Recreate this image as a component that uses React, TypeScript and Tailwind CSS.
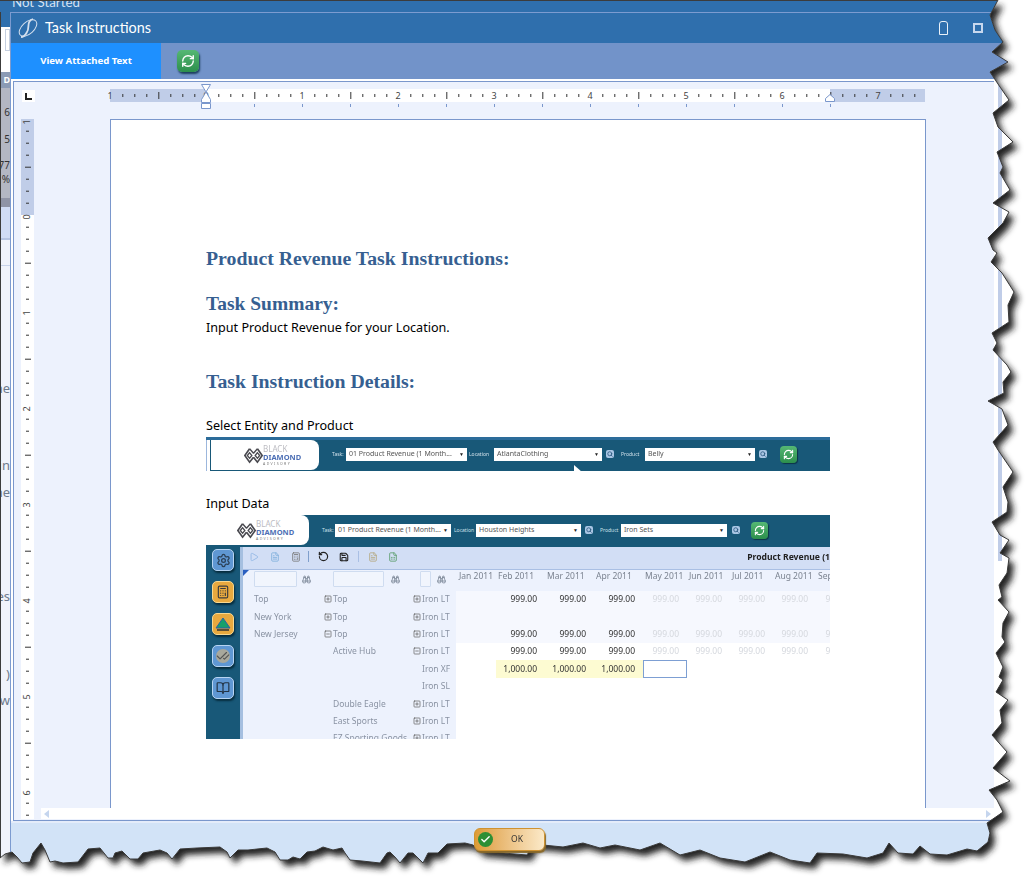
import { Binoculars, BookOpen, Calculator, Check, CheckCheck, FileSpreadsheet, FileText, Play, RefreshCw, RotateCcw, Save, Search, Settings, SquareMinus, SquarePlus } from "lucide-react";

const EDGE =
  "998,0 990,15 995,30 1003,42 992,52 1008,62 990,72 1000,87 1009,100 993,113 998,127 1013,142 997,152 1003,167 1000,173 1010,190 " +
  "993,203 1009,212 1003,223 988,238 993,250 997,253 991,262 1002,273 1014,292 1008,305 1009,322 992,333 997,343 993,350 1007,365 1011,372 1003,382 1004,393 988,401 1002,409 1008,425 993,442 998,450 " +
  "1013,472 1003,487 1008,502 1007,512 992,522 1000,535 1009,540 1000,553 1009,558 1007,573 999,585 1002,597 998,600 1009,612 1003,623 1002,637 1005,642 996,653 1003,667 999,677 1003,680 996,692 1008,700 1000,710 " +
  "1002,723 992,735 1007,752 993,768 1010,781 989,790 997,800 1003,812 987,823 990,833 988,842 977,851 967,849 947,855 930,854 920,846 913,854 898,853 889,843 883,853 867,858 843,854 817,853 810,863 790,860 770,852 745,862 720,858 700,850 680,855 660,843 640,850 615,845 " +
  "600,848 583,843 563,847 543,845 533,845 527,855 480,851 473,845 465,843 447,844 438,853 428,853 423,863 413,853 408,853 400,863 395,857 390,852 387,853 380,863 362,861 350,860 345,853 342,848 333,850 323,847 315,851 307,852 300,859 " +
  "293,857 288,860 280,860 275,852 267,848 248,850 238,850 230,858 227,852 220,847 197,848 180,849 172,859 167,853 160,850 143,853 138,859 130,859 122,851 115,853 113,858 108,858 100,848 88,849 78,862 63,863 55,861 50,862 45,850 41,843 33,853 30,862 22,863 17,857 12,852 5,854 0,858";

const dataCols = ["w-[40px] pl-[3px]", "w-[49px] pl-[2px]", "w-[49px] pl-[2px]", "w-[49px] pl-[2px]", "w-[44px] pl-[2px]", "w-[43px] pl-[2px]", "w-[43px] pl-[2px]", "w-[43px] pl-[2px]", "w-[44px] pl-[2px]"];
const cellCols = ["w-[40px]", "w-[49px]", "w-[49px]", "w-[49px]", "w-[44px]", "w-[43px]", "w-[43px]", "w-[43px]", "w-[44px]"];
const months = ["Jan 2011", "Feb 2011", "Mar 2011", "Apr 2011", "May 2011", "Jun 2011", "Jul 2011", "Aug 2011", "Sep 2011"];

const rows = [
  { a: "Top", b: "Top", bx: "+", c: "Iron LT", cx: "+", v: "999.00" },
  { a: "New York", b: "Top", bx: "+", c: "Iron LT", cx: "+", v: "" },
  { a: "New Jersey", b: "Top", bx: "-", c: "Iron LT", cx: "+", v: "999.00" },
  { a: "", b: "Active Hub", bx: "", c: "Iron LT", cx: "-", v: "999.00" },
  { a: "", b: "", bx: "", c: "Iron XF", cx: "", v: "1,000.00" },
  { a: "", b: "", bx: "", c: "Iron SL", cx: "", v: "" },
  { a: "", b: "Double Eagle", bx: "", c: "Iron LT", cx: "+", v: "" },
  { a: "", b: "East Sports", bx: "", c: "Iron LT", cx: "+", v: "" },
  { a: "", b: "EZ Sporting Goods", bx: "", c: "Iron LT", cx: "+", v: "" },
];

function GreenRefresh({ big }: { big?: boolean }) {
  return (
    <div className={big ? "flex h-[22px] w-[22px] items-center justify-center rounded-[5px] bg-gradient-to-b from-[#55b874] to-[#2c8f4c] shadow-[1px_2px_2px_#1c3f5e]" : "flex h-[17px] w-[17px] items-center justify-center rounded-[4px] bg-gradient-to-b from-[#55b874] to-[#2c8f4c] shadow-[1px_1px_1px_#0d3346]"}>
      <RefreshCw size={big ? 14 : 11} color="#fff" strokeWidth={2.4} />
    </div>
  );
}

function HRuler() {
  const ticks = [];
  for (let x = 110.3; x < 925; x += 12) {
    const k = Math.round((x - 206.3) / 12);
    if (k % 8 === 0) continue;
    const long = k % 4 === 0;
    ticks.push(<rect key={x} x={x} y={long ? 92 : 94} width="1" height={long ? 7 : 3} fill="#333" />);
  }
  const marks = [];
  for (let x = 254; x <= 830; x += 48) marks.push(<rect key={x} x={x} y="104" width="1" height="3" fill="#7a97cc" />);
  const nums = [[110, "1"], [206, "0"], [302, "1"], [398, "2"], [494, "3"], [590, "4"], [686, "5"], [782, "6"], [878, "7"]] as const;
  return (
    <svg width="840" height="27" viewBox="100 83 840 27" className="block">
      <rect x="110" y="89" width="815" height="13" fill="#c0cde8" />
      <rect x="205" y="89" width="625" height="13" fill="#fff" />
      {ticks}
      {marks}
      {nums.map(([x, t], i) => (
        <text key={i} x={x} y="99" fontSize="9" textAnchor="middle" fill="#444" fontFamily="Noto Sans, sans-serif">{t}</text>
      ))}
      <path d="M201.5 84.5h9l-4.5 7.5zM201.5 99.5l4.5-7.5 4.5 7.5v3h-9zM201.5 103.5h9v5h-9z" fill="#fff" stroke="#7a97cc" />
      <path d="M825.5 101.5v-3l4.5-4 4.5 4v3z" fill="#fff" stroke="#7a97cc" />
    </svg>
  );
}

function VRuler() {
  const ticks = [];
  for (let y = 131.7; y < 820; y += 12) {
    const k = Math.round((y - 215.7) / 12);
    if (k % 8 === 0) continue;
    const long = k % 4 === 0;
    ticks.push(<rect key={y} x={long ? 25 : 26} y={y} width={long ? 6 : 3} height="1" fill="#333" />);
  }
  const nums = [[123, "1"], [218, "0"], [314, "1"], [410, "2"], [506, "3"], [602, "4"], [698, "5"], [794, "6"]] as const;
  return (
    <svg width="13" height="700" viewBox="21 120 13 700" className="block shrink-0">
      <rect x="21" y="120" width="13" height="700" fill="#fff" />
      <rect x="21" y="120" width="13" height="96" fill="#c0cde8" />
      {ticks}
      {nums.map(([y, t], i) => (
        <text key={i} x="27.5" y={y} fontSize="9" textAnchor="middle" dominantBaseline="middle" fill="#444" fontFamily="Noto Sans, sans-serif" transform={`rotate(-90 27.5 ${y})`}>{t}</text>
      ))}
    </svg>
  );
}

function DiamondLogo({ small }: { small?: boolean }) {
  return (
    <div className={small ? "flex w-[103px] items-center pl-[31px]" : "flex w-[108px] items-center pl-[33px]"}>
      <svg width="19" height="17" viewBox="0 0 34 30" fill="none" stroke="#4a4a50" strokeWidth="3">
        <path d="M10 3 1.5 15 10 27l7-9" />
        <path d="M24 3l8.5 12L24 27l-7-9" />
        <path d="M17 11 10 3M17 11l7-8M10 10l-4 5 4 5 4-5zM24 10l-4 5 4 5 4-5z" strokeWidth="2.4" />
      </svg>
      <div className="flex flex-col leading-none">
        <span className="text-[8px] leading-[8px] text-[#bcbcc2]">BLACK</span>
        <span className="text-[7.5px] font-bold leading-[8px] text-[#4d6fb5]">DIAMOND</span>
        <span className="text-[3.5px] leading-[5px] tracking-[1.4px] text-[#777]">ADVISORY</span>
      </div>
    </div>
  );
}

function MiniSelect({ text, className }: { text: string; className: string }) {
  return (
    <div className={"flex h-[13px] items-center justify-between bg-white px-[3px] text-[7px] text-[#555] " + className}>
      <span className="whitespace-nowrap">{text}</span>
      <span className="text-[5px] text-[#222]">▼</span>
    </div>
  );
}

function MiniSearch() {
  return (
    <div className="flex h-[8px] w-[8px] items-center justify-center rounded-[2px] bg-[#a9c6e4]">
      <Search size={6} color="#24527a" strokeWidth={3} />
    </div>
  );
}

function Tile({ children, orange }: { children: React.ReactNode; orange?: boolean }) {
  return (
    <div className={orange ? "flex h-[22px] w-[22px] items-center justify-center rounded-[5px] border border-[#f8d890] bg-[#e8a93f] shadow-[1px_2px_2px_#062c3d]" : "flex h-[22px] w-[22px] items-center justify-center rounded-[5px] border border-[#b7d4f2] bg-[#5f97d3] shadow-[1px_2px_2px_#062c3d]"}>
      {children}
    </div>
  );
}

function Expander({ kind }: { kind: string }) {
  if (kind === "+") return <SquarePlus size={8} color="#555" className="shrink-0" />;
  if (kind === "-") return <SquareMinus size={8} color="#555" className="shrink-0" />;
  return <span className="w-[8px] shrink-0" />;
}

function InputDataShot() {
  return (
    <div className="flex h-[224px] w-[624px] flex-col overflow-hidden font-['Noto_Sans'] blur-[0.3px]">
      <div className="flex h-[32px] shrink-0 bg-[#185878]">
        <div className="flex h-[30px] rounded-r-[8px] bg-white">
          <DiamondLogo small />
        </div>
        <div className="flex items-center pb-[2px]">
          <span className="ml-[13px] w-[13px] text-[5px] text-[#cfe0ea]">Task:</span>
          <MiniSelect text="01 Product Revenue (1 Month..." className="w-[116px]" />
          <span className="ml-[3px] w-[22px] text-[5px] text-[#cfe0ea]">Location</span>
          <MiniSelect text="Houston Heights" className="w-[105px]" />
          <span className="ml-[4px]"><MiniSearch /></span>
          <span className="ml-[7px] w-[21px] text-[5px] text-[#cfe0ea]">Product</span>
          <MiniSelect text="Iron Sets" className="w-[106px]" />
          <span className="ml-[5px]"><MiniSearch /></span>
          <span className="ml-[11px]"><GreenRefresh /></span>
        </div>
      </div>
      <div className="flex min-h-0 flex-1">
        <div className="flex w-[34px] shrink-0 flex-col items-center gap-[10px] bg-[#185878] pt-[2px]">
          <Tile><Settings size={15} color="#2a3f55" /></Tile>
          <Tile orange><Calculator size={14} color="#3c3c3c" /></Tile>
          <Tile orange>
            <svg width="16" height="14" viewBox="0 0 16 14"><path d="M8 1 15 11H1z" fill="#18a06a" stroke="#2c5fa8" /><path d="M2 13h12" stroke="#333" strokeWidth="1.5" /></svg>
          </Tile>
          <Tile><CheckCheck size={14} color="#555" className="rounded-full bg-[#a8a89c]" /></Tile>
          <Tile><BookOpen size={14} color="#234" /></Tile>
        </div>
        <div className="w-[3px] shrink-0 bg-[#a5bfe0]" />
        <div className="flex min-w-0 flex-1 flex-col">
          <div className="flex h-[23px] shrink-0 items-center border-b border-[#a9bfe4] bg-[#d2def5] pb-[3px] pl-[6px]">
            <Play size={10} color="#8fb6e4" />
            <FileText size={10} color="#7fb0dc" className="ml-[11px]" />
            <Calculator size={10} color="#777" className="ml-[11px]" />
            <span className="ml-[7px] h-[11px] w-px bg-[#7f9fcc]" />
            <RotateCcw size={11} color="#222" strokeWidth={2.6} className="ml-[9px]" />
            <Save size={10} color="#222" strokeWidth={2.6} className="ml-[10px]" />
            <span className="ml-[9px] h-[11px] w-px bg-[#a9bfe4]" />
            <FileText size={10} color="#b5a77e" className="ml-[9px]" />
            <FileSpreadsheet size={10} color="#5a9c6a" className="ml-[10px]" />
            <span className="ml-auto whitespace-nowrap text-[8.6px] font-bold text-[#222]">Product Revenue (1</span>
          </div>
          <div className="flex min-h-0 flex-1">
            <div className="relative w-[213px] shrink-0 bg-[#edf2fd] text-[8.5px] text-[#8a93a3]">
              <div className="absolute left-0 top-0 h-0 w-0 border-r-[6px] border-t-[6px] border-r-transparent border-t-[#2a5fc0]" />
              <div className="flex h-[20.6px] items-center pb-[2px]">
                <div className="ml-[11px] h-[16px] w-[43px] rounded-[1px] border border-[#cfdcf0] bg-[#f1f5fd]" />
                <Binoculars size={9} color="#6f7b8c" className="ml-[5px]" />
                <div className="ml-[22px] h-[16px] w-[51px] rounded-[1px] border border-[#cfdcf0] bg-[#f1f5fd]" />
                <Binoculars size={9} color="#6f7b8c" className="ml-[7px]" />
                <div className="ml-[20px] h-[16px] w-[11px] rounded-[1px] border border-[#cfdcf0] bg-[#f1f5fd]" />
                <Binoculars size={9} color="#6f7b8c" className="ml-[6px]" />
              </div>
              {rows.map((r, i) => (
                <div key={i} className="flex h-[17.4px] items-center whitespace-nowrap">
                  <span className="ml-[11px] w-[70px]">{r.a}</span>
                  <Expander kind={r.bx} />
                  <span className="ml-[1px] w-[80px]">{r.b}</span>
                  <Expander kind={r.cx} />
                  <span className="ml-[1px]">{r.c}</span>
                </div>
              ))}
            </div>
            <div className="min-w-0 flex-1 overflow-hidden bg-white">
              <div className="flex h-[20.6px] w-[500px] items-center bg-[#edf2fd] pb-[9px] text-[8.5px] text-[#7b8390]">
                {months.map((m, i) => (
                  <span key={m} className={"shrink-0 whitespace-nowrap " + dataCols[i]}>{m}</span>
                ))}
              </div>
              {rows.slice(0, 5).map((r, i) => (
                <div key={i} className={i < 3 ? "flex h-[17.4px] w-[500px] items-center bg-[#f6f8fe] text-[8.5px]" : "flex h-[17.4px] w-[500px] items-center text-[8.5px]"}>
                  {cellCols.map((c, j) => {
                    const yellow = i === 4 && j > 0 && j < 4;
                    const selected = i === 4 && j === 4;
                    const grey = j > 3;
                    return (
                      <span
                        key={j}
                        className={
                          "flex h-full shrink-0 items-center justify-end pr-[8px] " +
                          c +
                          (yellow ? " bg-[#fdfbd2] text-[#333]" : grey ? " text-[#d5d8de]" : " text-[#333]") +
                          (selected ? " border border-[#7d9fd3]" : "")
                        }
                      >
                        {j === 0 || selected || i === 4 && j > 4 ? "" : r.v}
                      </span>
                    );
                  })}
                </div>
              ))}
            </div>
          </div>
        </div>
      </div>
    </div>
  );
}

function EntityShot() {
  return (
    <div className="relative flex h-[34px] w-[624px] overflow-hidden border-t-[3px] border-[#2c6c9a] bg-[#185878] font-['Noto_Sans'] blur-[0.3px]">
      <div className="flex h-full w-[4px] shrink-0 border-l border-[#9cb7dd] bg-white" />
      <div className="flex h-[30px] rounded-r-[8px] border-l border-[#185878] bg-white">
        <DiamondLogo />
      </div>
      <div className="flex items-center pb-[3px]">
        <span className="ml-[13px] w-[14px] text-[5px] text-[#cfe0ea]">Task:</span>
        <MiniSelect text="01 Product Revenue (1 Month..." className="w-[121px]" />
        <span className="ml-[2px] w-[25px] text-[5px] text-[#cfe0ea]">Location</span>
        <MiniSelect text="AtlantaClothing" className="w-[108px]" />
        <span className="ml-[4px]"><MiniSearch /></span>
        <span className="ml-[7px] w-[24px] text-[5px] text-[#cfe0ea]">Product</span>
        <MiniSelect text="Belly" className="w-[110px]" />
        <span className="ml-[4px]"><MiniSearch /></span>
        <span className="ml-[13px]"><GreenRefresh /></span>
      </div>
      <svg width="9" height="7" viewBox="0 0 9 7" className="absolute left-[368px] top-[25px]"><path d="M0 0v7h8z" fill="#fff" /></svg>
    </div>
  );
}

export default function App() {
  const outer = EDGE + " 0,887 1035,887 1035,0";
  const inner = EDGE + " 0,0";
  return (
    <div className="relative flex h-[887px] w-[1035px] flex-col overflow-hidden bg-white font-['Noto_Sans']">
      <div className="h-[12px] shrink-0 overflow-hidden border-t border-[#3c3c3c] bg-[#2f6fad]">
        <div className="-mt-[9px] ml-[12px] font-['Lato'] text-[13.3px] leading-[20px] text-[#d5e2f2]">Not Started</div>
      </div>

      <div className="flex min-h-0 flex-1">
        {/* window behind the dialog */}
        <div className="flex w-[10px] shrink-0 flex-col overflow-hidden border-l border-[#3c3c3c] bg-[#f0f3fb] text-[13px] leading-[16px] text-[#6d7a8c]">
          <div className="h-[15px] bg-[#2f6fad]" />
          <div className="h-[45px] bg-white pl-[4px] pt-[2px]"><div className="h-[22px] border border-[#c5cfdf] bg-white" /></div>
          <div className="flex h-[16px] items-center justify-end bg-[#8b9bb5] text-[9px] font-bold text-white">D</div>
          <div className="flex h-[110px] flex-col items-end bg-[#b3b7c3] text-[10px] leading-[12px] text-[#333]">
            <span className="mt-[18px]">6</span>
            <span className="mt-[15px]">5</span>
            <span className="mt-[14px]">77</span>
            <span className="mt-[2px]">%</span>
          </div>
          <div className="h-[9px] bg-[#8f94a6]" />
          <div className="h-[33px] border-b-2 border-[#b5c4e2] bg-[#d0dcf5]" />
          <div className="h-[26px] border-b border-[#c8d3ea]" />
          <div className="mt-[114px] flex justify-end whitespace-nowrap">ne</div>
          <div className="mt-[61px] flex justify-end whitespace-nowrap">in</div>
          <div className="mt-[11px] flex justify-end whitespace-nowrap">ne</div>
          <div className="mt-[88px] flex justify-end whitespace-nowrap">es</div>
          <div className="mt-[62px] flex justify-end whitespace-nowrap">)</div>
          <div className="mt-[10px] flex justify-end whitespace-nowrap">w</div>
        </div>

        {/* dialog */}
        <div className="flex min-w-0 flex-1 flex-col border-l border-t border-[#7c9bd0]">
          <div className="flex h-[30px] shrink-0 items-center bg-[#2f6fad] pl-[7px]">
            <svg width="20" height="20" viewBox="0 0 20 20" fill="none" stroke="#d5e0ee">
              <ellipse cx="10" cy="10" rx="10.5" ry="6" transform="rotate(-42 10 10)" strokeWidth="1" />
              <path d="M15 1C8 3 12 10 9 14 7.500 17 5 19 3 19" strokeWidth="1.8" />
            </svg>
            <span className="ml-[7px] w-[106px] whitespace-nowrap font-['Lato'] text-[14.4px] leading-[20px] text-white">Task Instructions</span>
            <div className="ml-[788px] h-[14px] w-[9px] rounded-t-[3px] border-[1.5px] border-[#eaf1f8]" />
            <div className="ml-[25px] h-[10px] w-[10px] border-2 border-[#c8d8ee]" />
          </div>

          <div className="flex h-[36px] shrink-0 items-center bg-[#7293c9]">
            <div className="flex h-full w-[150px] items-center justify-center bg-[#1e90ff] text-[9.6px] font-bold text-white">View Attached Text</div>
            <div className="ml-[16px]"><GreenRefresh big /></div>
          </div>

          <div className="flex pt-[2px]">
            <div className="ml-[2px] h-[740px] w-[981px] shrink-0 border-b border-l border-t border-[#7a97cc] bg-[#edf2fd]">
              <div className="flex h-[37px]">
                <div className="ml-[8px] mt-[8px] flex h-[12px] w-[13px] items-center justify-center bg-white">
                  <svg width="7" height="7" viewBox="0 0 7 7"><path d="M1 0v6h6" stroke="#222" strokeWidth="2" fill="none" /></svg>
                </div>
                <div className="ml-[65px] mt-[1px]"><HRuler /></div>
              </div>
              <div className="flex">
                <div className="ml-[7px]"><VRuler /></div>
                <div className="ml-[7px] flex min-w-0 flex-1 flex-col">
                  <div className="pl-[69px]">
                    <div className="h-[689px] w-[816px] overflow-hidden border-l border-r border-t border-[#7a97cc] bg-white pl-[95px] pt-[128px] font-['Noto_Sans'] text-[12.6px] leading-[18px] text-black">
                      <h1 className="font-['Liberation_Serif'] text-[19.8px] font-bold leading-[20px] text-[#365f91]">Product Revenue Task Instructions:</h1>
                      <h2 className="mt-[26px] font-['Liberation_Serif'] text-[19.5px] font-bold leading-[20px] text-[#365f91]">Task Summary:</h2>
                      <p className="mb-[-1px] mt-[5px]">Input Product Revenue for your Location.</p>
                      <h2 className="mt-[35px] font-['Liberation_Serif'] text-[19.8px] font-bold leading-[20px] text-[#365f91]">Task Instruction Details:</h2>
                      <p className="mb-[-1px] mt-[26px]">Select Entity and Product</p>
                      <div className="mt-[3px]"><EntityShot /></div>
                      <p className="mb-[-1px] mt-[24px]">Input Data</p>
                      <div className="mt-[3px]"><InputDataShot /></div>
                    </div>
                  </div>
                  <div className="flex h-[11px] items-center justify-between bg-white px-[3px]">
                    <span className="h-0 w-0 border-b-[4px] border-r-[5px] border-t-[4px] border-b-transparent border-r-[#c5d5ee] border-t-transparent" />
                    <span className="h-0 w-0 border-b-[4px] border-l-[5px] border-t-[4px] border-b-transparent border-l-[#c5d5ee] border-t-transparent" />
                  </div>
                </div>
              </div>
            </div>
            <div className="relative h-[480px] w-[41px]">
              <div className="ml-[4px] h-full w-[4px] bg-[#c0cde8]" />
            </div>
          </div>

          <div className="relative flex-1 border-t-[2px] border-[#e4ecfa] bg-[#d2e3f7] pl-[463px] pt-[5px]">
            <div className="relative z-20 flex h-[23px] w-[71px] items-center rounded-[6px] border border-[#cf9231] bg-gradient-to-r from-[#dd9c34] to-[#fbe9c8] pl-[3px] shadow-[1px_2px_1px_#8a6a2a]">
              <div className="flex h-[15px] w-[15px] items-center justify-center rounded-full bg-[#2d8f35]">
                <Check size={11} color="#fff" strokeWidth={3} />
              </div>
              <span className="ml-[18px] text-[8.5px] text-[#333]">OK</span>
            </div>
          </div>
        </div>
      </div>

      {/* torn paper edge of the screenshot */}
      <svg width="1035" height="887" viewBox="0 0 1035 887" className="absolute left-0 top-0 z-10">
        <defs>
          <filter id="tornBlur" x="-5%" y="-5%" width="110%" height="110%">
            <feGaussianBlur stdDeviation="3" />
          </filter>
          <clipPath id="tornOuter">
            <polygon points={outer} />
          </clipPath>
        </defs>
        <polygon points={outer} fill="#fff" />
        <g clipPath="url(#tornOuter)">
          <polygon points={inner} fill="#222" filter="url(#tornBlur)" transform="translate(5 6)" />
        </g>
        <polyline points={EDGE} fill="none" stroke="#3a3a3a" strokeWidth="1" />
      </svg>
    </div>
  );
}
